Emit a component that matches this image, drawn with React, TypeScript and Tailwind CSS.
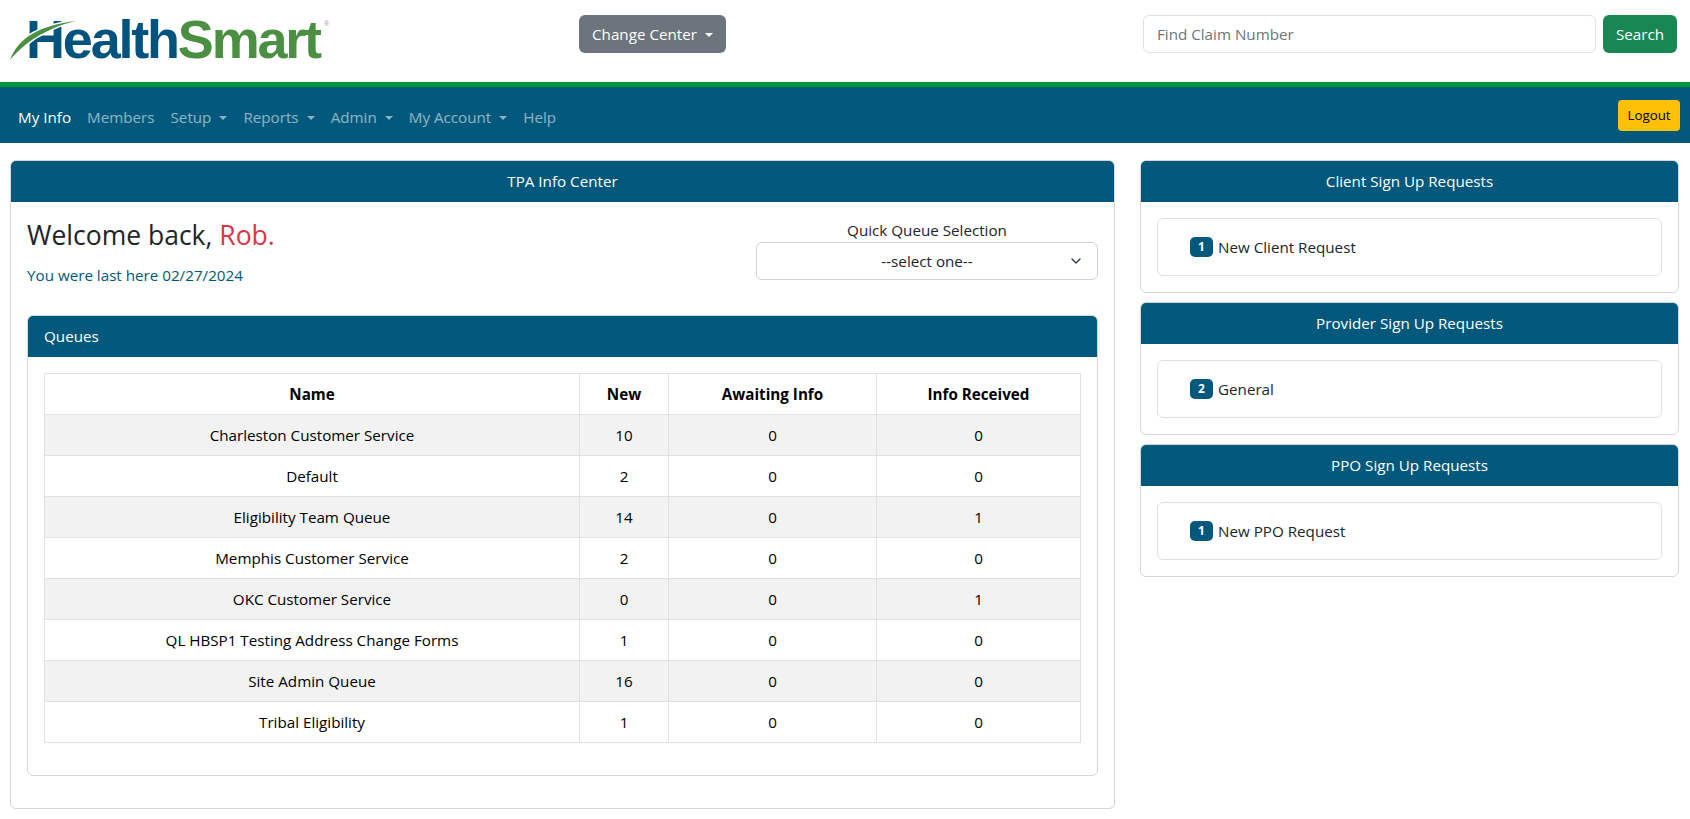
import { ChevronDown } from "lucide-react";

const font = { fontFamily: '"Open Sans", sans-serif' };

type Queue = { name: string; fresh: number; awaiting: number; received: number };

const queues: Queue[] = [
  { name: "Charleston Customer Service", fresh: 10, awaiting: 0, received: 0 },
  { name: "Default", fresh: 2, awaiting: 0, received: 0 },
  { name: "Eligibility Team Queue", fresh: 14, awaiting: 0, received: 1 },
  { name: "Memphis Customer Service", fresh: 2, awaiting: 0, received: 0 },
  { name: "OKC Customer Service", fresh: 0, awaiting: 0, received: 1 },
  { name: "QL HBSP1 Testing Address Change Forms", fresh: 1, awaiting: 0, received: 0 },
  { name: "Site Admin Queue", fresh: 16, awaiting: 0, received: 0 },
  { name: "Tribal Eligibility", fresh: 1, awaiting: 0, received: 0 },
];

const signups = [
  { title: "Client Sign Up Requests", count: 1, label: "New Client Request" },
  { title: "Provider Sign Up Requests", count: 2, label: "General" },
  { title: "PPO Sign Up Requests", count: 1, label: "New PPO Request" },
];

function Caret() {
  return <span className="ml-[8px] inline-block align-[3px] border-x-[4.8px] border-t-[4.8px] border-x-transparent border-t-current" />;
}

function Logo() {
  return (
    <div className="relative h-[50px] w-[322px] overflow-hidden">
      <div
        className="pl-[16px] text-[54px] leading-[50px] font-bold tracking-[-2.2px] text-[#00537c] whitespace-nowrap"
        style={{ fontFamily: '"Liberation Sans", Arial, sans-serif' }}
      >
        Health<span className="text-[#4a8f42]">Smart</span>
        <span className="absolute top-[6px] left-[314px] text-[7px] leading-none font-normal tracking-normal text-[#9aa5a0]">®</span>
      </div>
      <svg className="absolute top-0 left-0" width="90" height="50" viewBox="0 0 90 50">
        <path d="M0 46 C8 24 30 11 66 7 C44 12 26 22 14 32 C8 37 3 42 0 46Z" fill="#fff" stroke="#fff" strokeWidth="3" />
        <path d="M0 46 C8 24 30 11 66 7 C44 12 26 22 14 32 C8 37 3 42 0 46Z" fill="#4a8f42" />
      </svg>
    </div>
  );
}

function NavLink({ label, active, caret }: { label: string; active?: boolean; caret?: boolean }) {
  return (
    <a className={`px-[8px] py-[8px] leading-[24px] whitespace-nowrap ${active ? "text-white" : "text-white/55"}`}>
      {label}
      {caret && <Caret />}
    </a>
  );
}

function CardHeader({ title, center }: { title: string; center?: boolean }) {
  return (
    <div className={`h-[41px] bg-[#00587c] rounded-t-[5px] px-[16px] text-white leading-[40px] ${center ? "text-center" : ""}`}>
      {title}
    </div>
  );
}

export default function App() {
  return (
    <div className="min-h-[819px] bg-white text-[15.2px] text-[#212529]" style={font}>
      <header className="flex h-[82px] items-start">
        <div className="w-[579px] shrink-0 pl-[10px] pt-[14px]">
          <Logo />
        </div>
        <button className="mt-[15px] h-[38px] w-[147px] rounded-[6px] bg-[#6c757d] text-white">
          Change Center
          <Caret />
        </button>
        <div className="ml-auto mt-[15px] mr-[13px] flex gap-[7px]">
          <div className="h-[38px] w-[453px] rounded-[6px] border border-[#dee2e6] pl-[13px] leading-[36px] text-[#6c757d]">Find Claim Number</div>
          <button className="h-[38px] w-[74px] rounded-[6px] bg-[#198754] text-white">Search</button>
        </div>
      </header>
      <nav className="flex h-[61px] items-start border-t-[5px] border-[#00953b] bg-[#00587c] pl-[10px] pr-[10px] pt-[10px]">
        <NavLink label="My Info" active />
        <NavLink label="Members" />
        <NavLink label="Setup" caret />
        <NavLink label="Reports" caret />
        <NavLink label="Admin" caret />
        <NavLink label="My Account" caret />
        <NavLink label="Help" />
        <button className="ml-auto mt-[3px] h-[31px] w-[62px] rounded-[4px] bg-[#ffc107] text-[13.3px] text-black">Logout</button>
      </nav>
      <main className="flex items-start gap-[25px] pl-[10px] pr-[11px] pt-[17px]">
        <section className="w-[1105px] shrink-0 rounded-[6px] border border-[#d5d7d9] pb-[32px]">
          <CardHeader title="TPA Info Center" center />
          <div className="flex h-[113px] px-[16px] pt-[16px]">
            <div className="flex-1">
              <h1 className="text-[26.5px] leading-[34px] font-medium">
                Welcome back, <span className="text-[#dc3545]">Rob.</span>
              </h1>
              <p className="mt-[11px] text-[#00587c] leading-[24px]">You were last here 02/27/2024</p>
            </div>
            <div className="w-[342px]">
              <div className="text-center leading-[24px]">Quick Queue Selection</div>
              <div className="relative h-[38px] rounded-[6px] border border-[#ced4da] text-center leading-[36px]">
                --select one--
                <ChevronDown className="absolute top-[10px] right-[13px]" size={16} strokeWidth={2} color="#343a40" />
              </div>
            </div>
          </div>
          <div className="mx-[16px] rounded-[6px] border border-[#d5d7d9] pb-[32px]">
            <CardHeader title="Queues" />
            <div className="px-[16px] pt-[16px]">
              <table className="w-full border-collapse text-center text-black">
                <thead>
                  <tr className="h-[41px]">
                    <th className="w-[535px] border border-[#dee2e6] font-bold">Name</th>
                    <th className="w-[89px] border border-[#dee2e6] font-bold">New</th>
                    <th className="w-[208px] border border-[#dee2e6] font-bold">Awaiting Info</th>
                    <th className="border border-[#dee2e6] font-bold">Info Received</th>
                  </tr>
                </thead>
                <tbody>
                  {queues.map((q, i) => (
                    <tr key={q.name} className={`h-[41px] ${i % 2 === 0 ? "bg-[#f2f2f2]" : ""}`}>
                      <td className="border border-[#dee2e6]">{q.name}</td>
                      <td className="border border-[#dee2e6]">{q.fresh}</td>
                      <td className="border border-[#dee2e6]">{q.awaiting}</td>
                      <td className="border border-[#dee2e6]">{q.received}</td>
                    </tr>
                  ))}
                </tbody>
              </table>
            </div>
          </div>
        </section>
        <aside className="flex flex-1 flex-col gap-[9px]">
          {signups.map((s) => (
            <div key={s.title} className="h-[133px] rounded-[6px] border border-[#d5d7d9]">
              <CardHeader title={s.title} center />
              <div className="px-[16px] pt-[16px]">
                <div className="flex h-[58px] items-center rounded-[6px] border border-[#dee2e6] pl-[32px]">
                  <span className="flex h-[20px] w-[23px] items-center justify-center rounded-[5px] bg-[#00587c] text-[12px] font-bold text-white">{s.count}</span>
                  <span className="ml-[5px]">{s.label}</span>
                </div>
              </div>
            </div>
          ))}
        </aside>
      </main>
    </div>
  );
}
